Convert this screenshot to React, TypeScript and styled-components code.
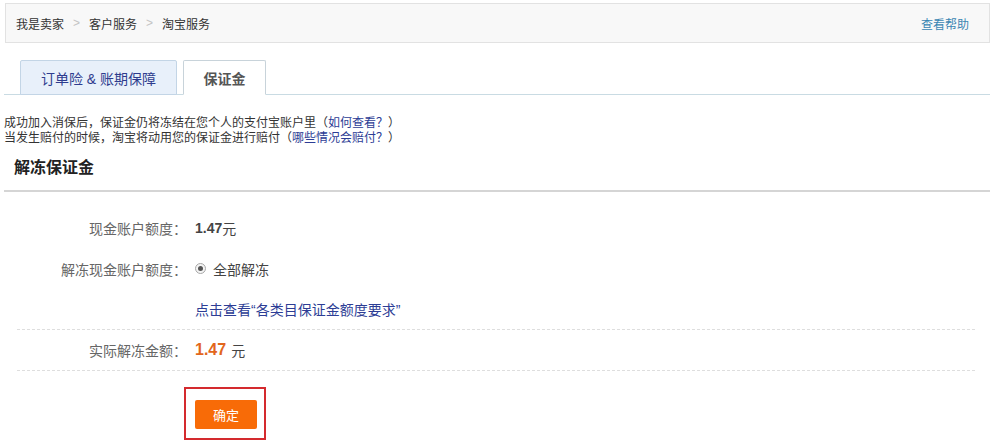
import React from 'react';
import styled, { createGlobalStyle, css } from 'styled-components';

const GlobalStyle = createGlobalStyle`
  body {
    margin: 0;
    background: #fff;
    font-family: 'Liberation Sans', 'Noto Sans CJK SC', sans-serif;
    color: #333;
  }
`;

const Page = styled.div`
  width: 994px;
  box-sizing: border-box;
  padding: 3px 4px 0 4px;
`;

const Breadcrumb = styled.div`
  margin-left: 1px;
  height: 38px;
  border: 1px solid #e2e2e2;
  background: #f8f8f8;
  display: flex;
  align-items: center;
  justify-content: space-between;
  padding: 0 20px 0 10px;
  font-size: 12px;
`;

const Crumbs = styled.div`
  display: flex;
  align-items: center;
  gap: 9px;
  color: #333;
`;

const Sep = styled.span`
  color: #c4c4c4;
  font-family: 'Liberation Sans', sans-serif;
`;

const HelpLink = styled.a`
  color: #3b86b3;
  text-decoration: none;
`;

const TabBar = styled.div`
  margin-top: 17px;
  display: flex;
  align-items: flex-end;
  gap: 6px;
  padding-left: 16px;
  border-bottom: 1px solid #c9dbe3;
`;

const Tab = styled.div<{ $active?: boolean }>(
  ({ $active }) => css`
    height: 35px;
    margin-bottom: -1px;
    box-sizing: border-box;
    display: flex;
    align-items: center;
    justify-content: center;
    font-size: 14px;
    border: 1px solid ${$active ? '#c8d3da' : '#c3d5e6'};
    border-radius: 2px 2px 0 0;
    ${$active
      ? css`
          width: 83px;
          background: #fff;
          border-bottom-color: #fff;
          color: #555;
          font-weight: bold;
        `
      : css`
          width: 157px;
          background: #e8f0fa;
          color: #2e3c8e;
        `}
  `,
);

const Intro = styled.div`
  margin-top: 21px;
  font-size: 12px;
  line-height: 15px;
  color: #333;
`;

const InlineLink = styled.a`
  color: #2d3d95;
  text-decoration: none;
`;

const SectionTitle = styled.h2`
  margin: 10px 0 0;
  padding: 0 0 10px 10px;
  font-size: 16px;
  line-height: 24px;
  font-weight: bold;
  color: #222;
  border-bottom: 2px solid #d5d5d5;
`;

const Form = styled.div`
  padding: 16px 15px 0 13px;
`;

const Row = styled.div<{ $dashed?: boolean; $h?: number }>(
  ({ $dashed, $h = 40 }) => css`
    display: flex;
    align-items: center;
    height: ${$h}px;
    font-size: 14px;
    ${$dashed && 'border-bottom: 1px dashed #dedede;'}
  `,
);

const Label = styled.div`
  width: 170px;
  flex-shrink: 0;
  text-align: right;
  color: #666;
  padding-right: 8px;
`;

const Value = styled.div`
  display: flex;
  align-items: center;
  color: #444;
`;

const Amount = styled.b<{ $accent?: boolean }>(
  ({ $accent }) => css`
    font-family: 'Liberation Sans', sans-serif;
    font-weight: bold;
    font-size: ${$accent ? '16px' : '14px'};
    color: ${$accent ? '#e2661c' : '#444'};
    margin-right: ${$accent ? '5px' : '0'};
  `,
);

const Radio = styled.span`
  width: 11px;
  height: 11px;
  box-sizing: border-box;
  border: 1px solid #a8a8a8;
  border-radius: 50%;
  background: #f4f4f4;
  display: inline-flex;
  align-items: center;
  justify-content: center;
  margin-right: 7px;

  &::after {
    content: '';
    width: 5px;
    height: 5px;
    border-radius: 50%;
    background: #555;
  }
`;

const ButtonRow = styled.div`
  margin-top: 16px;
  padding-left: 167px;
`;

const Highlight = styled.div`
  display: inline-block;
  border: 2px solid #d42a2e;
  padding: 11px 7px 9px 9px;
`;

const ConfirmButton = styled.button`
  width: 62px;
  height: 29px;
  border: none;
  border-radius: 2px;
  background: #f86b07;
  color: #fff;
  font-size: 13px;
  font-family: 'Noto Sans CJK SC', sans-serif;
  display: block;
`;

const App: React.FC = () => (
  <Page>
    <GlobalStyle />
    <Breadcrumb>
      <Crumbs>
        <span>我是卖家</span>
        <Sep>&gt;</Sep>
        <span>客户服务</span>
        <Sep>&gt;</Sep>
        <span>淘宝服务</span>
      </Crumbs>
      <HelpLink>查看帮助</HelpLink>
    </Breadcrumb>

    <TabBar>
      <Tab>订单险 &amp; 账期保障</Tab>
      <Tab $active>保证金</Tab>
    </TabBar>

    <Intro>
      成功加入消保后，保证金仍将冻结在您个人的支付宝账户里（<InlineLink>如何查看？</InlineLink>）
      <br />
      当发生赔付的时候，淘宝将动用您的保证金进行赔付（<InlineLink>哪些情况会赔付？</InlineLink>）
    </Intro>

    <SectionTitle>解冻保证金</SectionTitle>

    <Form>
      <Row>
        <Label>现金账户额度：</Label>
        <Value>
          <Amount>1.47</Amount>元
        </Value>
      </Row>
      <Row $h={41}>
        <Label>解冻现金账户额度：</Label>
        <Value>
          <Radio />
          全部解冻
        </Value>
      </Row>
      <Row $h={40} $dashed>
        <Label />
        <Value>
          <InlineLink>点击查看“各类目保证金额度要求”</InlineLink>
        </Value>
      </Row>
      <Row $h={40} $dashed>
        <Label>实际解冻金额：</Label>
        <Value>
          <Amount $accent>1.47</Amount>元
        </Value>
      </Row>
      <ButtonRow>
        <Highlight>
          <ConfirmButton>确定</ConfirmButton>
        </Highlight>
      </ButtonRow>
    </Form>
  </Page>
);

export default App;
